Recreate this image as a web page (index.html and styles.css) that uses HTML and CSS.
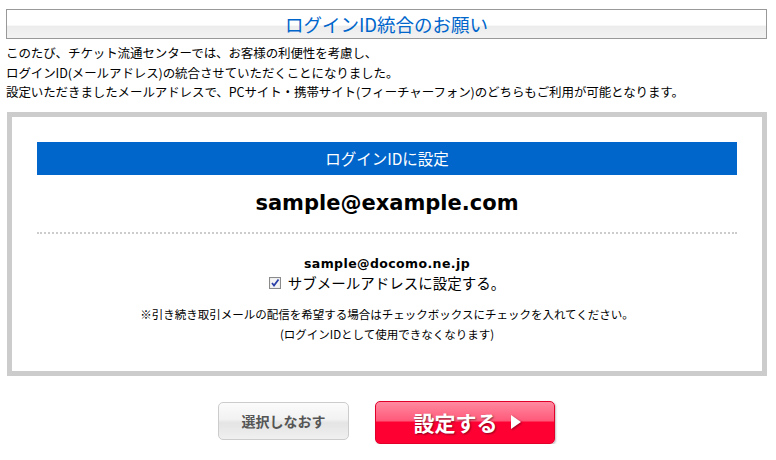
FILE: index.html
```html
<!DOCTYPE html>
<html lang="ja">
	<head>
		<meta charset="UTF-8" />
		<meta name="viewport" content="width=device-width, initial-scale=1.0" />
		<title>ログインID統合のお願い</title>
		<link rel="stylesheet" href="styles.css">
	</head>
	<body>
		<div class="page">
			<h1 class="page-title">ログインID統合のお願い</h1>
			<p class="intro">
				このたび、チケット流通センターでは、お客様の利便性を考慮し、<br>
				ログインID(メールアドレス)の統合させていただくことになりました。<br>
				設定いただきましたメールアドレスで、PCサイト・携帯サイト(フィーチャーフォン)のどちらもご利用が可能となります。
			</p>

			<div class="panel">
				<div class="panel-head">ログインIDに設定</div>
				<div class="main-mail">sample@example.com</div>
				<div class="sub">
					<div class="sub-mail">sample@docomo.ne.jp</div>
					<label class="sub-check">
						<input type="checkbox" class="check-input" checked>
						<svg class="check-box" width="12" height="12" viewBox="0 0 12 12">
							<rect x="0.5" y="0.5" width="11" height="11" fill="#e9e9e9" stroke="#8a8a8a" />
							<rect x="1.5" y="1.5" width="9" height="9" fill="#f4f4f4" />
							<path d="M3 6 L5 8.5 L9.5 2.5" fill="none" stroke="#2b3fa8" stroke-width="1.8" />
						</svg>
						<span>サブメールアドレスに設定する。</span>
					</label>
				</div>
				<p class="note">
					※引き続き取引メールの配信を希望する場合はチェックボックスにチェックを入れてください。<br>
					(ログインIDとして使用できなくなります)
				</p>
			</div>

			<div class="actions">
				<button type="button" class="btn-back">選択しなおす</button>
				<button type="button" class="btn-submit">設定する<span class="arrow"></span></button>
			</div>
		</div>
	</body>
</html>
```

FILE: styles.css
```css
body {
	margin: 0;
	padding: 0;
	background-color: #fff;
	color: #000;
	font-family: "Noto Sans CJK JP", "DejaVu Sans", sans-serif;
}
.page {
	width: 761px;
	padding: 9px 0 0 6px;
}
.page-title {
	margin: 0;
	height: 28px;
	line-height: 28px;
	border: 1px solid #999;
	background: linear-gradient(#fff 0%, #fff 55%, #ececec 56%, #f2f2f2 100%);
	color: #0066cc;
	font-size: 18.5px;
	font-weight: normal;
	text-align: center;
}
.intro {
	margin: 4px 0 0 0;
	font-size: 12.5px;
	line-height: 19.5px;
	letter-spacing: -0.1px;
}
.panel {
	margin: 10px 0 0 1px;
	border: 5px solid #ccc;
	padding: 25px 25px 27px 25px;
	text-align: center;
}
.panel-head {
	height: 33px;
	line-height: 33px;
	background-color: #0066cc;
	color: #fff;
	font-size: 15.5px;
}
.main-mail {
	padding: 12px 0 12px 0;
	border-bottom: 2px dotted #ccc;
	font-family: "DejaVu Sans", sans-serif;
	font-weight: bold;
	font-size: 21px;
	line-height: 33px;
}
.sub {
	margin-top: 22px;
}
.sub-mail {
	font-family: "DejaVu Sans", sans-serif;
	font-weight: bold;
	font-size: 12.5px;
	letter-spacing: 0.4px;
	line-height: 16px;
}
.sub-check {
	display: flex;
	justify-content: center;
	align-items: center;
	gap: 7px;
	height: 22px;
	font-size: 14.5px;
}
.check-input {
	display: none;
}
.note {
	margin: 10px 0 0 0;
	font-size: 11.5px;
	line-height: 20px;
}
.actions {
	display: flex;
	justify-content: center;
	align-items: flex-start;
	gap: 26px;
	padding-top: 25px;
}
.btn-back {
	margin-top: 1px;
	width: 131px;
	height: 38px;
	border: 1px solid #ccc;
	border-radius: 5px;
	background: linear-gradient(#fbfbfb 0%, #f2f2f2 45%, #e4e4e4 55%, #f0f0f0 100%);
	color: #555;
	font-family: "Noto Sans CJK JP", sans-serif;
	font-weight: bold;
	font-size: 14px;
	cursor: pointer;
}
.btn-submit {
	display: flex;
	align-items: center;
	justify-content: center;
	gap: 13px;
	width: 180px;
	height: 43px;
	padding: 0 0 0 4px;
	border: 1px solid #e0002a;
	border-radius: 5px;
	background: linear-gradient(#ff8aa0 0%, #ff5a7a 45%, #ff0033 50%, #ff0033 100%);
	box-shadow: 1px 1px 2px rgba(0, 0, 0, 0.25);
	color: #fff;
	font-family: "Noto Sans CJK JP", sans-serif;
	font-weight: bold;
	font-size: 21px;
	text-shadow: 1px 1px 2px rgba(0, 0, 0, 0.45);
	cursor: pointer;
}
.arrow {
	width: 0;
	height: 0;
	border-top: 7px solid transparent;
	border-bottom: 7px solid transparent;
	border-left: 10px solid #fff;
	filter: drop-shadow(1px 1px 1px rgba(0, 0, 0, 0.4));
}
```
